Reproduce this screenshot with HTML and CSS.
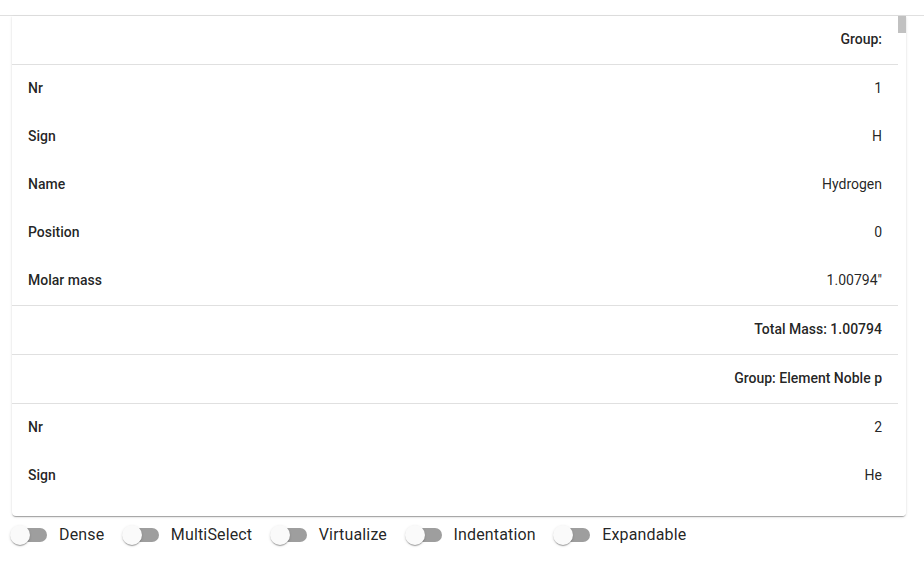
FILE: index.html
```html
<!DOCTYPE html>
<html>
<head>
<meta charset="utf-8">
<link rel="stylesheet" href="styles.css">
</head>
<body>
<div class="topbar"></div>
<div class="card">
  <div class="scroll">
    <div class="row group bordered"><span class="glabel">Group:</span></div>
    <div class="row"><span class="key">Nr</span><span class="val">1</span></div>
    <div class="row"><span class="key">Sign</span><span class="val">H</span></div>
    <div class="row"><span class="key">Name</span><span class="val">Hydrogen</span></div>
    <div class="row"><span class="key">Position</span><span class="val">0</span></div>
    <div class="row bordered"><span class="key">Molar mass</span><span class="val">1.00794"</span></div>
    <div class="row group bordered"><span class="glabel">Total Mass: 1.00794</span></div>
    <div class="row group bordered"><span class="glabel">Group: Element Noble p</span></div>
    <div class="row"><span class="key">Nr</span><span class="val">2</span></div>
    <div class="row"><span class="key">Sign</span><span class="val">He</span></div>
  </div>
  <div class="scrollbar"><div class="thumb"></div></div>
</div>
<div class="toggles">
  <label class="toggle"><span class="switch"><span class="track"></span><span class="knob"></span></span><span class="tlabel">Dense</span></label>
  <label class="toggle"><span class="switch"><span class="track"></span><span class="knob"></span></span><span class="tlabel">MultiSelect</span></label>
  <label class="toggle"><span class="switch"><span class="track"></span><span class="knob"></span></span><span class="tlabel">Virtualize</span></label>
  <label class="toggle"><span class="switch"><span class="track"></span><span class="knob"></span></span><span class="tlabel">Indentation</span></label>
  <label class="toggle"><span class="switch"><span class="track"></span><span class="knob"></span></span><span class="tlabel">Expandable</span></label>
</div>
</body>
</html>
```
FILE: styles.css
```css
html, body {
  margin: 0;
  padding: 0;
  background: #ffffff;
  font-family: Roboto, "Liberation Sans", Arial, sans-serif;
  color: rgba(0, 0, 0, 0.87);
}

.topbar {
  height: 15px;
  border-bottom: 1px solid #e0e0e0;
}

.card {
  margin-left: 12px;
  width: 894px;
  height: 500px;
  display: flex;
  background: #fff;
  border-radius: 0 0 4px 4px;
  box-shadow: 0px 2px 1px -1px rgba(0,0,0,0.2), 0px 1px 1px 0px rgba(0,0,0,0.14), 0px 1px 3px 0px rgba(0,0,0,0.12);
  overflow: hidden;
}

.scroll {
  flex: 1;
  overflow: hidden;
}

.scrollbar {
  width: 8px;
  flex: none;
  background: #fff;
}

.thumb {
  height: 17px;
  background: #c1c1c1;
}

.row {
  height: 48px;
  display: flex;
  align-items: center;
  justify-content: space-between;
  padding: 0 16px;
  font-size: 14px;
}

.row span {
  margin-bottom: 2px;
}

.row.bordered {
  border-bottom: 1px solid #e0e0e0;
}

.row.group {
  justify-content: flex-end;
}

.key, .glabel {
  font-weight: 500;
}

.val {
  font-weight: 400;
}

.toggles {
  display: flex;
  padding-left: 12px;
}

.toggle {
  display: flex;
  align-items: center;
  margin-left: -11px;
  margin-right: 19.5px;
}

.switch {
  position: relative;
  width: 58px;
  height: 38px;
  flex: none;
}

.track {
  position: absolute;
  left: 12px;
  top: 12px;
  width: 34px;
  height: 14px;
  border-radius: 7px;
  background: #9e9e9e;
}

.knob {
  position: absolute;
  left: 9px;
  top: 9px;
  width: 20px;
  height: 20px;
  border-radius: 50%;
  background: #fafafa;
  box-shadow: 0px 2px 1px -1px rgba(0,0,0,0.2), 0px 1px 1px 0px rgba(0,0,0,0.14), 0px 1px 3px 0px rgba(0,0,0,0.12);
}

.tlabel {
  font-size: 16px;
  line-height: 1.5;
  letter-spacing: 0.00938em;
}
```
